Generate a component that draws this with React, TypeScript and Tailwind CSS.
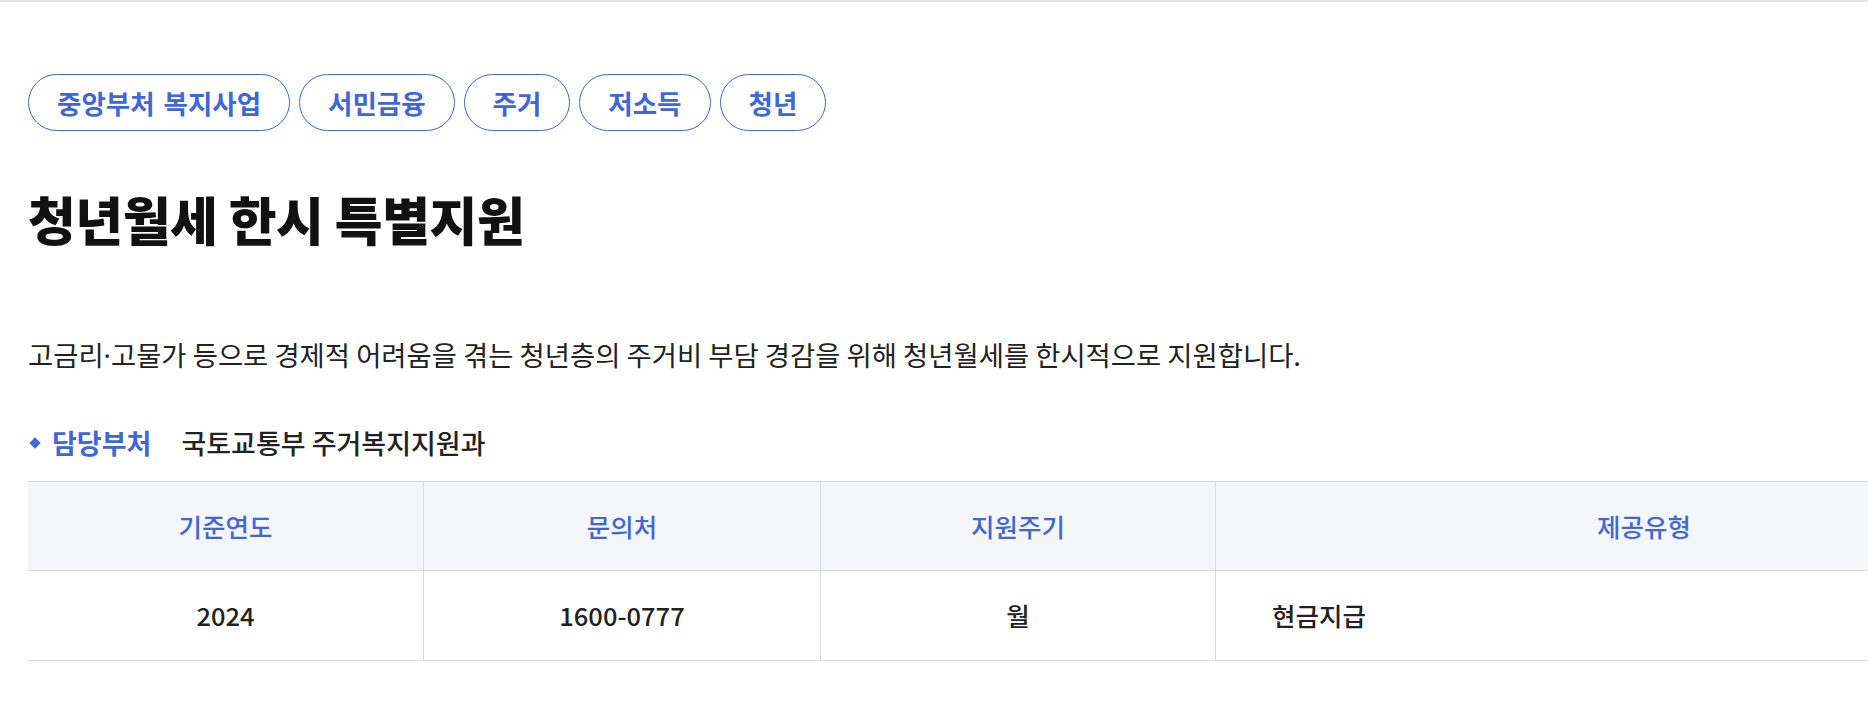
import React from "react";

const tags = ["중앙부처 복지사업", "서민금융", "주거", "저소득", "청년"];

const columns = [
    { label: "기준연도", value: "2024", align: "center" },
    { label: "문의처", value: "1600-0777", align: "center" },
    { label: "지원주기", value: "월", align: "center" },
    { label: "제공유형", value: "현금지급", align: "left" },
];

export default function App() {
    return (
        <div
            className="min-h-screen bg-white border-t-2 border-[#e3e3e3] overflow-hidden text-[#222]"
            style={{ fontFamily: '"Noto Sans CJK KR", "Noto Sans", sans-serif' }}
        >
            <div className="pl-[28px] pt-[72px]">
                {/* Category tags */}
                <div className="flex gap-[9px]">
                    {tags.map((t) => (
                        <span
                            key={t}
                            className="h-[57px] px-[28px] flex items-center rounded-full border border-[#3f66db] text-[#3f66db] text-[26.5px] font-bold [word-spacing:3px]"
                        >
                            {t}
                        </span>
                    ))}
                </div>

                <h1 className="mt-[55px] text-[52px] leading-[66px] font-black text-[#111] tracking-[-0.5px]">
                    청년월세 한시 특별지원
                </h1>

                <p className="mt-[84px] text-[27.4px] leading-[36px] text-[#222]">
                    고금리<span style={{ fontFamily: '"Noto Sans", sans-serif' }}>·</span>고물가 등으로 경제적 어려움을 겪는 청년층의 주거비 부담 경감을 위해 청년월세를 한시적으로 지원합니다.
                </p>

                {/* Department */}
                <div className="mt-[51px] flex items-center h-[36px]">
                    <span className="w-[8px] h-[8px] rotate-45 bg-[#3f66db] ml-[3px] mr-[13px]" />
                    <span className="text-[27px] font-bold text-[#3f66db]">담당부처</span>
                    <span className="ml-[30px] text-[27px] font-medium text-[#222]">국토교통부 주거복지지원과</span>
                </div>

                {/* Info table */}
                <div className="mt-[20px] w-[2044px] grid grid-cols-[396px_397px_395px_856px] border-t border-b border-[#dcdcdc]">
                    {columns.map((c, i) => (
                        <div
                            key={c.label}
                            className={
                                "h-[89px] flex items-center justify-center bg-[#f5f6fa] border-b border-[#dcdcdc] text-[25.5px] font-medium text-[#3f66db] " +
                                (i < columns.length - 1 ? "border-r" : "")
                            }
                        >
                            {c.label}
                        </div>
                    ))}
                    {columns.map((c, i) => (
                        <div
                            key={c.value}
                            className={
                                "h-[89px] flex items-center text-[25.5px] font-medium text-[#222] border-[#dcdcdc] " +
                                (c.align === "center" ? "justify-center " : "justify-start pl-[56px] ") +
                                (i < columns.length - 1 ? "border-r" : "")
                            }
                        >
                            {c.value}
                        </div>
                    ))}
                </div>
            </div>
        </div>
    );
}
